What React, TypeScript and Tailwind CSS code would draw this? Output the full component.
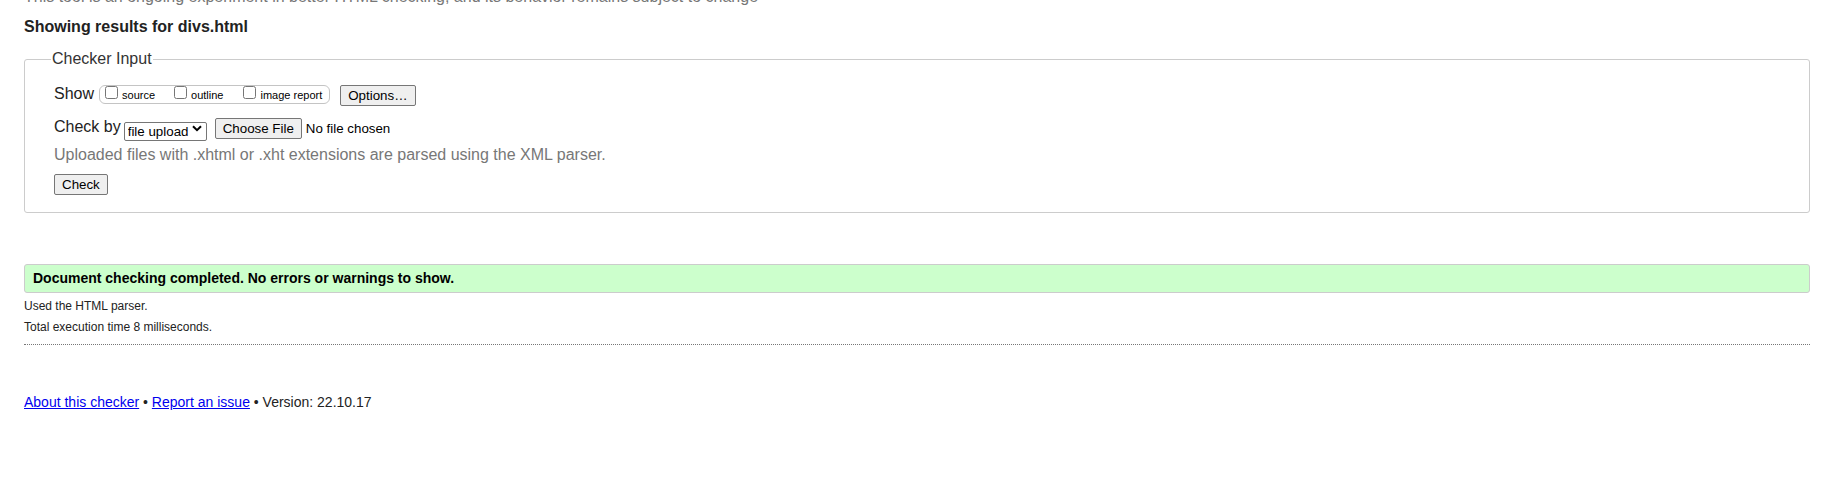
import React from "react";

/* ─── small form bits ─────────────────────────────── */
function Btn({ children, className = "" }: { children: React.ReactNode; className?: string }) {
  return (
    <button
      type="button"
      className={`h-[21px] px-[7px] border border-[#767676] bg-[#efefef] rounded-[2px] text-[13.33px] leading-[15px] text-black ${className}`}
    >
      {children}
    </button>
  );
}

function Opt({ label, className = "" }: { label: string; className?: string }) {
  return (
    <label className={`flex items-start ${className}`}>
      <input type="checkbox" className="m-0 w-[13px] h-[13px]" />
      <span className="ml-[4px] mt-[3px] text-[11px] leading-[13px] text-black">{label}</span>
    </label>
  );
}

export default function App() {
  return (
    <div className="min-h-[497px] overflow-hidden bg-white pl-[24px] pr-[13px] font-['Liberation_Sans',Arial,sans-serif] text-[#222]">
      <p className="-mt-[12px] text-[16px] leading-[18px] text-[#777]">
        This tool is an ongoing experiment in better HTML checking, and its behavior remains subject to change
      </p>

      <h2 className="mt-[12px] text-[16px] leading-[18px] font-bold text-[#222]">Showing results for divs.html</h2>

      {/* ─── Checker input ─── */}
      <fieldset className="mt-[14px] border border-[#ccc] rounded-[3px] pl-[26px] pr-[26px] pb-[16px]">
        <legend className="px-[1px] text-[16px] leading-[18px] text-[#333]">Checker Input</legend>
        <div className="pl-[3px] pt-[17px]">
          <div className="flex items-start h-[20px]">
            <span className="text-[16px] leading-[18px] text-[#222]">Show</span>
            <span className="ml-[5px] flex items-start h-[19px] border border-[#c4c4c4] rounded-[6px] pl-[5px] pr-[7px]">
              <Opt label="source" />
              <Opt label="outline" className="ml-[19px]" />
              <Opt label="image report" className="ml-[20px]" />
            </span>
            <Btn className="ml-[10px] h-[20px]">Options…</Btn>
          </div>

          <div className="mt-[13px] flex items-start h-[21px]">
            <span className="text-[16px] leading-[18px] text-[#222]">Check by</span>
            <span className="relative ml-[3px] mt-[1px]">
              <select className="appearance-none w-[83px] h-[19px] border border-[#767676] rounded-[2px] bg-white pl-[3px] text-[13.33px] leading-[15px] text-black">
                <option>file upload</option>
              </select>
              <svg className="pointer-events-none absolute right-[5px] top-[6px]" width="10" height="7" viewBox="0 0 10 7">
                <path d="M1 1.2 L5 5.2 L9 1.2" fill="none" stroke="#000" strokeWidth="2" />
              </svg>
            </span>
            <Btn className="ml-[8px]">Choose File</Btn>
            <span className="ml-[4px] text-[13.33px] leading-[21px] text-black">No file chosen</span>
          </div>

          <p className="mt-[7px] text-[16px] leading-[18px] text-[#777]">
            Uploaded files with .xhtml or .xht extensions are parsed using the XML parser.
          </p>

          <div className="mt-[8px]">
            <Btn>Check</Btn>
          </div>
        </div>
      </fieldset>

      {/* ─── Result ─── */}
      <div className="mt-[51px] border border-[#ccc] rounded-[3px] bg-[#ccffcc] pl-[8px] pt-[5px] pb-[6px] text-[14px] leading-[16px] font-bold text-black">
        Document checking completed. No errors or warnings to show.
      </div>
      <p className="mt-[6px] text-[12px] leading-[14px] text-[#222]">Used the HTML parser.</p>
      <p className="mt-[7px] text-[12px] leading-[14px] text-[#222]">Total execution time 8 milliseconds.</p>
      <div className="mt-[10px] border-t border-dotted border-[#777]" />

      <p className="mt-[49px] text-[14px] leading-[16px] text-[#222]">
        <a href="#" className="text-[#0000ee] underline">About this checker</a>
        {" • "}
        <a href="#" className="text-[#0000ee] underline">Report an issue</a>
        {" • Version: 22.10.17"}
      </p>
    </div>
  );
}
